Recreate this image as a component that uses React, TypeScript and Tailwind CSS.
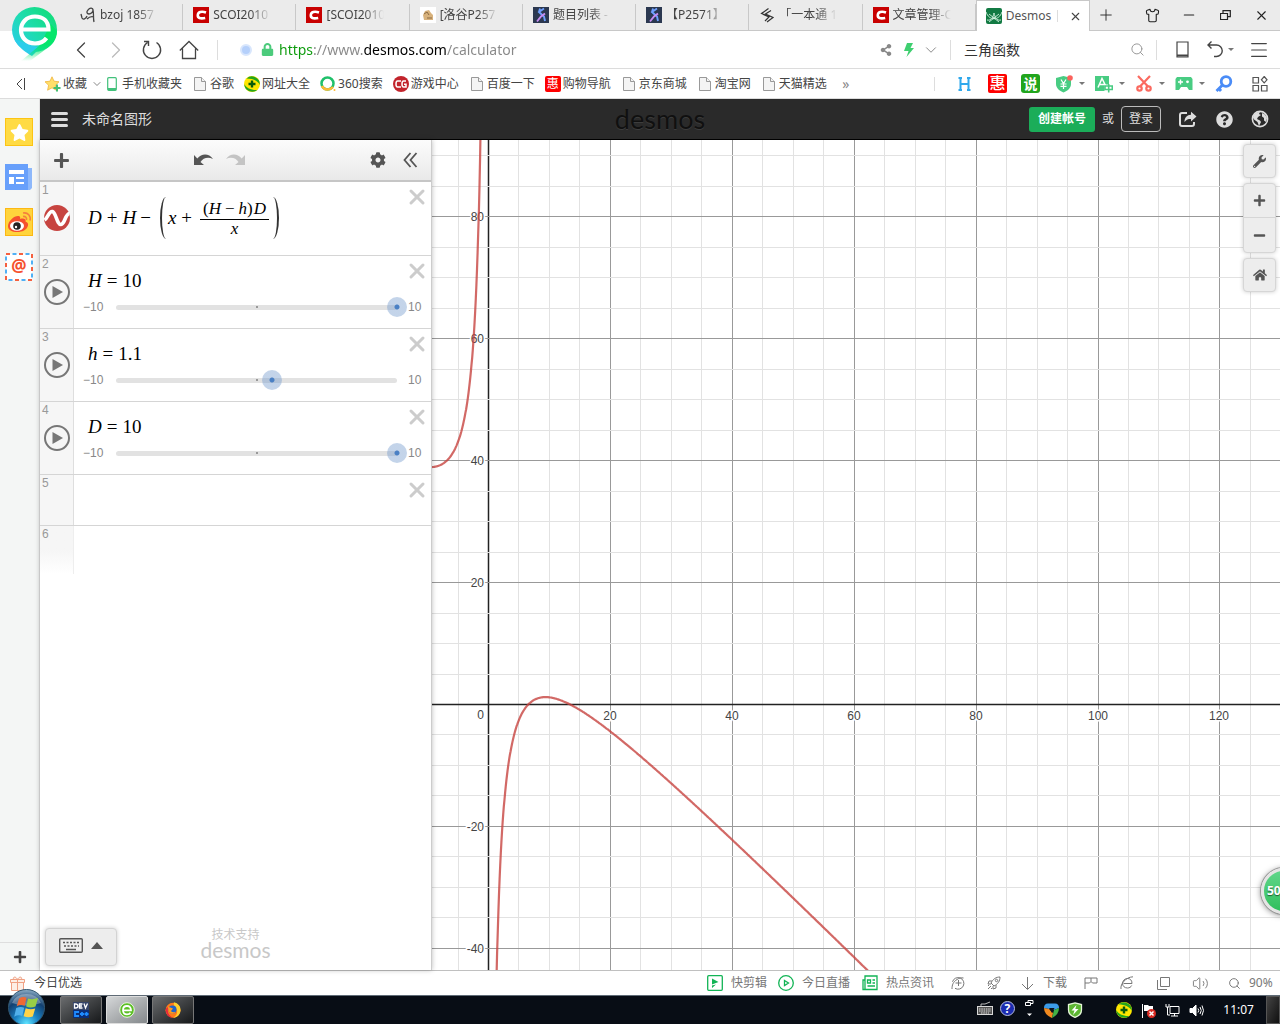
import { useState, type ReactNode } from 'react';
import {
  ChevronDown,
  ChevronLeft,
  ChevronRight,
  ChevronsLeft,
  Menu,
  Minus,
  Plus,
  Search,
  Shirt,
  Volume2,
  X,
} from 'lucide-react';
import {
  FaCog,
  FaGlobeAmericas,
  FaHome,
  FaLock,
  FaMinus,
  FaPlus,
  FaQuestionCircle,
  FaShareAlt,
  FaStar,
  FaWeibo,
  FaWrench,
} from 'react-icons/fa';

/* ---------- small shared pieces ---------- */

function IconButton({ label, className = '', children }: { label: string; className?: string; children: ReactNode }) {
  return (
    <button type="button" aria-label={label} className={`flex shrink-0 items-center justify-center ${className}`}>
      {children}
    </button>
  );
}

function Caret() {
  return <span className="h-0 w-0 border-x-[3px] border-t-[3px] border-x-transparent border-t-[#777]" />;
}

function DocIcon() {
  return (
    <svg width="12" height="14" viewBox="0 0 12 14" fill="#f4f4f4" stroke="#999">
      <path d="M.5.5h7l4 4v9H.5z" />
      <path d="M7.500.5v4h4" />
    </svg>
  );
}

function PlusBall() {
  return (
    <svg width="16" height="16" viewBox="0 0 16 16">
      <circle cx="8" cy="8" r="8" fill="#ffe600" />
      <path d="M2.500 2.500A8 8 0 0 1 15.800 9C14 5 9 2.500 2.500 2.500zM.2 8c2 4 7 6.300 13 6A8 8 0 0 1 .2 8z" fill="#25a51c" />
      <path d="M8 4.500v7M4.500 8h7" stroke="#0a5a0a" strokeWidth="2.400" />
    </svg>
  );
}

/* ---------- browser tabs ---------- */

function CsdnIcon() {
  return (
    <svg width="16" height="16" viewBox="0 0 16 16">
      <path d="M0 0h16v16H0z" fill="#c80000" />
      <path d="M13 5.500C8.500 4 5 5 4.800 8s2.200 4 7.400 3" fill="none" stroke="#fff" strokeWidth="2.600" />
    </svg>
  );
}

function BzojIcon() {
  return (
    <svg width="16" height="16" viewBox="0 0 16 16" fill="none" stroke="#444" strokeWidth="1.300">
      <path d="M1 7l1 4c1 2 4 1 5-2M8 3c-2 2-1 4 1 4s4-2 4-4-3-3-5 0zM13 3c1 4 0 8 1 12M7 12c2-2 4-3 7-2" />
    </svg>
  );
}

function LuoguIcon() {
  return (
    <svg width="16" height="16" viewBox="0 0 16 16">
      <path d="M0 0h16v16H0z" fill="#fff" />
      <path d="M3 8l2-4 4-1 2 3 2 2v5H4z" fill="#d8b27c" />
      <path d="M4 7l3-2 2 3M7 11h5" stroke="#8b6a42" fill="none" />
    </svg>
  );
}

function LojIcon() {
  return (
    <svg width="16" height="16" viewBox="0 0 16 16">
      <path d="M0 0h16v16H0z" fill="#2b3850" />
      <path d="M11 1.500L6 5l5 4.500 1 4.500M7 1.500L6 5" fill="none" stroke="#6fa0ff" strokeWidth="1.900" />
      <path d="M12 6.500L8 9.500 4 14.500" fill="none" stroke="#c68cf0" strokeWidth="1.900" />
    </svg>
  );
}

function OneBookIcon() {
  return (
    <svg width="14" height="16" viewBox="0 0 14 16" fill="none" stroke="#333" strokeWidth="1.200">
      <path d="M8.500 1.500L1.500 6.500 9 10 5 14M11 3.500L5.500 7l7.500 3.500-6 4.500" />
    </svg>
  );
}

function DesmosIcon() {
  return (
    <svg className="shrink-0" width="16" height="16" viewBox="0 0 16 16">
      <rect width="16" height="16" rx="2" fill="#127a43" />
      <path d="M0 4c3 9 13 9 16 0M1 12c5 1 6-3 7-7 1 4 2 8 7 7M3 14L13 6M13 14L3 6" fill="none" stroke="#d6f5e2" strokeWidth=".9" />
    </svg>
  );
}

const tabs = [
  { title: 'bzoj 1857', icon: <BzojIcon /> },
  { title: 'SCOI2010', icon: <CsdnIcon /> },
  { title: '[SCOI2010', icon: <CsdnIcon /> },
  { title: '[洛谷P257', icon: <LuoguIcon /> },
  { title: '题目列表 -', icon: <LojIcon /> },
  { title: '【P2571】', icon: <LojIcon /> },
  { title: '「一本通 1', icon: <OneBookIcon /> },
  { title: '文章管理-C', icon: <CsdnIcon /> },
];

function TabBar() {
  return (
    <div className="flex h-[31px] bg-[#ebebeb] pl-[70px] text-[12px] text-[#444]">
      <div className="flex min-w-0 flex-1">
        {tabs.map((tab, i) => (
          <button
            key={i}
            type="button"
            className="flex min-w-0 flex-1 items-center gap-[4px] border-b border-[#c8c8c8] pl-[10px] text-left"
          >
            <span className="flex w-4 shrink-0 justify-center">{tab.icon}</span>
            <span className="w-[58px] overflow-hidden whitespace-nowrap [mask-image:linear-gradient(to_right,black_65%,transparent)]">
              {tab.title}
            </span>
            <span className="ml-auto h-[26px] w-px self-end bg-[#c8c8c8]" />
          </button>
        ))}
        <div className="flex min-w-0 flex-1 items-center gap-[4px] border-x border-t border-[#c8c8c8] bg-white pl-[9px]">
          <DesmosIcon />
          <span className="whitespace-nowrap text-[#555]">Desmos</span>
          <span className="ml-[2px] h-3 w-px bg-[#ddd]" />
          <IconButton label="关闭标签" className="ml-auto w-[26px]">
            <X size={13} strokeWidth={2} color="#444" />
          </IconButton>
        </div>
      </div>
      <div className="flex w-[190px] shrink-0 items-center border-b border-[#c8c8c8] text-[#222]">
        <IconButton label="新建标签" className="w-[32px]">
          <Plus size={18} strokeWidth={1.2} />
        </IconButton>
        <div className="ml-auto flex">
          <IconButton label="皮肤" className="w-[36px]">
            <Shirt size={15} strokeWidth={1.8} />
          </IconButton>
          <IconButton label="最小化" className="w-[37px]">
            <Minus size={16} strokeWidth={1.8} />
          </IconButton>
          <IconButton label="还原" className="w-[36px]">
            <svg width="11" height="11" viewBox="0 0 11 11" fill="none" stroke="currentColor" strokeWidth="1.200">
              <path d="M.5 3.500h7v6h-7zM3 3V.7h7.300v6H8" />
            </svg>
          </IconButton>
          <IconButton label="关闭" className="w-[37px]">
            <X size={15} strokeWidth={1.8} />
          </IconButton>
        </div>
      </div>
    </div>
  );
}

function BrowserLogo() {
  return (
    <svg className="absolute top-[6px] left-[11px] z-10" width="47" height="56" viewBox="0 0 47 56">
      <defs>
        <linearGradient id="pin" x1="0" y1="1" x2="1" y2=".2">
          <stop offset="0" stopColor="#29ccf0" />
          <stop offset=".5" stopColor="#1fdcb0" />
          <stop offset="1" stopColor="#12dd78" />
        </linearGradient>
        <linearGradient id="tail" gradientUnits="userSpaceOnUse" x1="0" y1="38" x2="0" y2="55">
          <stop offset="0" stopColor="#06e66b" />
          <stop offset="1" stopColor="#06e66b" stopOpacity="0" />
        </linearGradient>
      </defs>
      <circle cx="23.500" cy="23.500" r="22.500" fill="url(#pin)" />
      <path d="M3 33C7 41 14 46 21 50l8-8z" fill="#2ccdea" />
      <path d="M10 55L28 40l12-22 6 7c0 9-5 14-11 18L19 55z" fill="url(#tail)" />
      <path d="M12 23.500h25.500C37.500 15 32 10.500 24 10.500c-8.500 0-14 6-14 13.500s5.500 13.500 14 13.500c5 0 9-2 11.500-5.500" fill="none" stroke="#fff" strokeWidth="4.200" />
    </svg>
  );
}

/* ---------- address bar ---------- */

function AddressBar() {
  return (
    <div className="flex h-[38px] items-center border-b border-[#dcdcdc] bg-white pl-[63px] text-[#444]">
      <IconButton label="后退" className="w-[36px]">
        <ChevronLeft size={28} strokeWidth={1.1} />
      </IconButton>
      <IconButton label="前进" className="w-[34px] text-[#bbb]">
        <ChevronRight size={28} strokeWidth={1.1} />
      </IconButton>
      <IconButton label="刷新" className="w-[38px]">
        <svg width="20" height="20" viewBox="0 0 20 20" fill="none" stroke="currentColor" strokeWidth="1.400">
          <path d="M14.500 2.500a8.600 8.600 0 1 1-9 0M2 1.500h4.500V6" />
        </svg>
      </IconButton>
      <IconButton label="主页" className="w-[36px]">
        <svg width="20" height="20" viewBox="0 0 20 20" fill="none" stroke="currentColor" strokeWidth="1.300">
          <path d="M.8 10.500L10 1.500l9.200 9M3.500 8.500v10h13v-10" />
        </svg>
      </IconButton>
      <span className="ml-[10px] h-5 w-px bg-[#ddd]" />
      <span className="ml-[22px] h-[12px] w-[12px] rounded-full border-2 border-[#d8e6fc] bg-[#b5d0fb]" />
      <FaLock className="ml-[9px] text-[#4ccb7c]" size={13} />
      <input
        type="text"
        aria-label="网址"
        defaultValue="https://www.desmos.com/calculator"
        className="ml-[5px] min-w-0 flex-1 bg-[linear-gradient(to_right,#0a9a0a_34px,#888_34px,#888_85px,#000_85px,#000_168px,#888_168px)] bg-clip-text text-[14px] text-transparent outline-none"
      />
      <IconButton label="分享" className="w-[24px] text-[#888]">
        <FaShareAlt size={12} />
      </IconButton>
      <IconButton label="极速模式" className="w-[21px] text-[#3fcf70]">
        <svg width="10" height="14" viewBox="0 0 10 14" fill="currentColor">
          <path d="M3 0h6L6.500 5H10L2.500 14 4.500 8H0z" />
        </svg>
      </IconButton>
      <IconButton label="更多" className="w-[24px] text-[#888]">
        <ChevronDown size={18} strokeWidth={1.3} />
      </IconButton>
      <span className="ml-[7px] h-5 w-px bg-[#ddd]" />
      <input
        type="text"
        aria-label="搜索"
        defaultValue="三角函数"
        className="ml-[13px] w-[160px] bg-transparent text-[14px] text-[#333] outline-none"
      />
      <IconButton label="搜索" className="w-[26px] text-[#999]">
        <Search size={15} strokeWidth={1.6} />
      </IconButton>
      <span className="ml-[6px] h-5 w-px bg-[#ddd]" />
      <IconButton label="手机" className="ml-[12px] w-[26px]">
        <svg width="13" height="17" viewBox="0 0 13 17" fill="none" stroke="currentColor" strokeWidth="1.200">
          <path d="M1 1h11v15H1z" />
          <path d="M1 14.500h11" strokeWidth="2" />
        </svg>
      </IconButton>
      <IconButton label="撤销关闭" className="ml-[8px] w-[34px] gap-[5px]">
        <svg width="16" height="17" viewBox="0 0 16 17" fill="none" stroke="currentColor" strokeWidth="1.400">
          <path d="M4.500.5L1 4l3.500 3.500M1 4h8.500a5.700 5.700 0 0 1 0 11.500H7" />
        </svg>
        <Caret />
      </IconButton>
      <IconButton label="菜单" className="mr-[5px] ml-[6px] w-[32px]">
        <Menu size={22} strokeWidth={1.3} />
      </IconButton>
    </div>
  );
}

/* ---------- bookmarks ---------- */

const bookmarks = [
  {
    label: '手机收藏夹',
    icon: (
      <svg width="10" height="14" viewBox="0 0 10 14">
        <rect x=".7" y=".7" width="8.600" height="12.600" rx="1" fill="#fff" stroke="#42c17b" strokeWidth="1.200" />
        <path d="M1 11h8v2H1z" fill="#42c17b" />
      </svg>
    ),
  },
  { label: '谷歌', icon: <DocIcon /> },
  { label: '网址大全', icon: <PlusBall /> },
  {
    label: '360搜索',
    icon: (
      <svg width="16" height="16" viewBox="0 0 16 16" fill="none" strokeWidth="2.500">
        <circle cx="7.500" cy="7.500" r="6" stroke="#1fc06a" />
        <path d="M2 10c2 4.500 8 4.500 11 1" stroke="#fdb933" />
        <circle cx="14.500" cy="14" r="1" fill="#fdb933" stroke="none" />
      </svg>
    ),
  },
  {
    label: '游戏中心',
    icon: (
      <svg width="16" height="16" viewBox="0 0 16 16">
        <circle cx="8" cy="8" r="8" fill="#c2242c" />
        <path d="M8 5H4.500Q3 5 3 8t1.500 3H8M13 5h-2.500Q9 5 9 8t1.500 3H13V8.300h-2" fill="none" stroke="#fff" strokeWidth="1.500" />
      </svg>
    ),
  },
  { label: '百度一下', icon: <DocIcon /> },
  {
    label: '购物导航',
    icon: (
      <span className="flex h-4 w-4 items-center justify-center rounded-[2px] bg-[#fe0000] text-[12px] leading-[12px] text-white">惠</span>
    ),
  },
  { label: '京东商城', icon: <DocIcon /> },
  { label: '淘宝网', icon: <DocIcon /> },
  { label: '天猫精选', icon: <DocIcon /> },
];

const extensions = [
  {
    label: '购物',
    icon: (
      <svg width="18" height="18" viewBox="0 0 18 18">
        <path d="M8.500 1L16 3v6c0 4-3.500 7-7.500 8.500C4.500 16 1 13 1 9V3z" fill="#48cc82" />
        <path d="M6 4.500l2.500 4 2.500-4M8.500 8.500V14M5.500 9h6M5.500 11.300h6" stroke="#fff" strokeWidth="1.200" fill="none" />
        <circle cx="15" cy="3" r="2.800" fill="#fb625c" />
      </svg>
    ),
  },
  {
    label: '翻译',
    icon: (
      <svg width="18" height="18" viewBox="0 0 18 18">
        <path d="M0 1h14v8.500H9.500V16H0z" fill="#48cc82" />
        <path d="M3 12.500l4-9 3.500 7M4.500 9.500h5" stroke="#fff" strokeWidth="1.500" fill="none" />
        <path d="M10 11h7.300v3.500H10zM13.700 9v8.500" stroke="#48cc82" strokeWidth="1.600" fill="none" />
      </svg>
    ),
  },
  {
    label: '截图',
    icon: (
      <svg width="16" height="17" viewBox="0 0 16 17" fill="none" stroke="#fb6a60" strokeWidth="2.200">
        <path d="M2 1l10 10.500M14 1L4 11.500" />
        <circle cx="3.500" cy="13.500" r="2.200" />
        <circle cx="12.500" cy="13.500" r="2.200" />
      </svg>
    ),
  },
  {
    label: '游戏',
    icon: (
      <svg width="18" height="15" viewBox="0 0 18 15">
        <path d="M2 1h14l1.500 2v11H14l-2-3H6l-2 3H.5V3z" fill="#48cc82" />
        <path d="M5.500 3.500v5M3 6h5" stroke="#fff" strokeWidth="1.400" />
        <circle cx="12.500" cy="5.800" r="1.400" fill="#fff" />
      </svg>
    ),
  },
];

function BookmarkBar() {
  return (
    <div className="flex h-[30px] items-center border-b border-[#dcdcdc] bg-white pl-[10px] text-[12px] text-[#444]">
      <IconButton label="侧栏" className="w-[22px]">
        <svg width="10" height="12" viewBox="0 0 10 12" fill="none" stroke="currentColor">
          <path d="M6 1L1 6l5 5M8.500 0v12" />
        </svg>
      </IconButton>
      <button type="button" className="ml-[13px] flex items-center gap-[2px] whitespace-nowrap">
        <svg width="16" height="16" viewBox="0 0 16 16">
          <path d="M7 .8l2 4.400 5 .6-3.600 3.400 1 5L7 11.800l-4.400 2.400 1-5L0 5.800l5-.6z" fill="#ffdf6b" stroke="#f0b43a" strokeWidth=".8" />
          <path d="M12 8.500v7M8.500 12h7" stroke="#45be74" strokeWidth="2" />
        </svg>
        收藏
        <ChevronDown className="ml-[2px]" size={12} strokeWidth={1.8} color="#777" />
      </button>
      <nav className="ml-px flex gap-[10px]" aria-label="收藏栏">
        {bookmarks.map((b) => (
          <a key={b.label} href="#" className="flex items-center gap-[2px] whitespace-nowrap">
            <span className="flex w-4 justify-center">{b.icon}</span>
            {b.label}
          </a>
        ))}
      </nav>
      <IconButton label="更多收藏" className="w-[38px] text-[14px] text-[#888]">
        »
      </IconButton>

      <div className="mr-[11px] ml-auto flex items-center">
        <span className="mr-[13px] h-[14px] w-px bg-[#ddd]" />
        <IconButton label="好搜" className="w-[33px] text-[#2fa8ec]">
          <svg width="13" height="14" viewBox="0 0 13 14" fill="none" stroke="currentColor" strokeWidth="2">
            <path d="M2.500 1v12M10.500 1v12M2 7h9M.5 1H4M.5 13H4M9 1h3.500M9 13h3.500" />
          </svg>
        </IconButton>
        <IconButton label="优惠" className="w-[33px]">
          <span className="flex h-[19px] w-[19px] items-center justify-center rounded-[2px] bg-[#fe0000] text-[16px] leading-[19px] font-medium text-white">惠</span>
        </IconButton>
        <IconButton label="说" className="mr-[7px] w-[33px]">
          <span className="flex h-[19px] w-[19px] items-center justify-center rounded-[3px] bg-[#21a51d] text-[14px] leading-[19px] font-bold text-white">说</span>
        </IconButton>
        {extensions.map((e) => (
          <IconButton key={e.label} label={e.label} className="w-[40px] gap-[5px] pr-[9px]">
            <span className="flex w-[20px] justify-center">{e.icon}</span>
            <Caret />
          </IconButton>
        ))}
        <IconButton label="密码" className="w-[20px]">
          <svg width="18" height="18" viewBox="0 0 18 18" fill="none" stroke="#4a8cf7" strokeWidth="2.800">
            <circle cx="11" cy="6.500" r="4.800" />
            <path d="M7.500 10L1.500 16M3.500 13l2.500 3" />
          </svg>
        </IconButton>
        <IconButton label="扩展" className="ml-[17px] w-[18px]">
          <svg width="16" height="16" viewBox="0 0 16 16" fill="none" stroke="#555" strokeWidth="1.200">
            <path d="M1 1.500h5.500V7H1zM1 9.500h5.500V15H1zM9.500 9.500H15V15H9.500zM12.200.5L15 3.800l-2.800 3-2.800-3z" />
          </svg>
        </IconButton>
      </div>
    </div>
  );
}

/* ---------- browser sidebar ---------- */

function Sidebar() {
  return (
    <aside className="flex w-[40px] shrink-0 flex-col border-r border-[#e2e2e2] bg-[#f4f6f5]">
      <div className="flex flex-col gap-[17px] pt-[19px] pl-[5px]">
        <IconButton label="收藏" className="h-7 w-7 border border-[#fcc413] bg-[#ffdb44] text-white">
          <FaStar size={19} />
        </IconButton>
        <IconButton label="新闻" className="h-7 w-7">
          <svg width="28" height="26" viewBox="0 0 28 26">
            <path d="M20 4h7v20l-2 2h-5z" fill="#8db8fb" />
            <path d="M0 0h23v26H0z" fill="#68a0fb" />
            <path d="M4 6h15v4H4zM4 13h5v7H4zM11 13h8v2h-8zM11 18h8v2h-8z" fill="#fff" />
          </svg>
        </IconButton>
        <IconButton label="微博" className="h-7 w-7 border border-[#fcb813] bg-[#ffd43c] text-[#f5512e]">
          <svg width="26" height="26" viewBox="0 0 26 26">
            <path d="M2 17c0-5 6-10 10-10 2.500 0 2.500 2 2 3 3-1 6.500-.5 5.500 2.500 2 .8 3 2.200 2.500 4-1 4.500-6 6.500-10.500 6.500C6 23 2 21 2 17z" fill="#f5512e" />
            <ellipse cx="11" cy="17" rx="7" ry="4.800" fill="#fff" />
            <circle cx="11" cy="17" r="3.800" fill="#222" />
            <circle cx="10" cy="18" r="1.200" fill="#fff" />
            <path d="M17 7.500c2.500-.5 4 1.500 3.500 3.500M17 4c5-1 8 3 7 7.500" fill="none" stroke="#f5803e" strokeWidth="1.600" />
          </svg>
        </IconButton>
        <IconButton label="邮箱" className="h-7 w-7">
          <svg width="28" height="28" viewBox="0 0 28 28" fill="none">
            <rect x="1" y="1" width="26" height="26" fill="#fff" stroke="#f5603f" strokeWidth="2" strokeDasharray="4 9" />
            <rect x="1" y="1" width="26" height="26" stroke="#4fb0f5" strokeWidth="2" strokeDasharray="4 9" strokeDashoffset="-6.500" />
            <text x="14" y="19" textAnchor="middle" fontSize="17" fontWeight="bold" fill="#f5512e" fontFamily="Noto Sans">@</text>
          </svg>
        </IconButton>
      </div>
      <IconButton label="添加" className="mt-auto h-[28px] w-full border-t border-[#dedede] text-[#444]">
        <FaPlus size={14} />
      </IconButton>
    </aside>
  );
}

/* ---------- calculator ---------- */

function Header() {
  return (
    <header className="grid h-[41px] grid-cols-[1fr_auto_1fr] items-center border-b border-black bg-[#2a2a2a] text-[#ddd]">
      <div className="flex items-center gap-[14px] pl-[11px]">
        <button type="button" aria-label="打开图形" className="flex w-[17px] flex-col gap-[3px]">
          <span className="h-[3px] rounded-sm bg-[#ddd]" />
          <span className="h-[3px] rounded-sm bg-[#ddd]" />
          <span className="h-[3px] rounded-sm bg-[#ddd]" />
        </button>
        <button type="button" className="text-[14px] leading-[18px]">未命名图形</button>
      </div>
      <span className="font-[Lato,sans-serif] text-[27px] leading-[36px] text-[#101010] [text-shadow:0_1px_0_#3d3d3d]">desmos</span>
      <div className="flex items-center justify-end pr-[2px] text-[12px]">
        <button type="button" className="h-[25px] rounded-[3px] bg-[#1bad59] px-[9px] font-bold text-white">创建帐号</button>
        <span className="px-[7px]">或</span>
        <button type="button" className="h-[26px] rounded-[4px] border border-[#bbb] px-[7px]">登录</button>
        <IconButton label="分享图形" className="ml-[9px] w-[36px]">
          <svg width="18" height="16" viewBox="0 0 18 16" fill="none" stroke="currentColor" strokeWidth="2">
            <path d="M8 2H3Q1 2 1 4v9q0 2 2 2h10q2 0 2-2v-2" />
            <path d="M17.500 5.500L12 .8v3C8 4 5.500 6.500 5.500 11 7.500 8.500 9 8 12 8v2.500z" fill="currentColor" stroke="none" />
          </svg>
        </IconButton>
        <IconButton label="帮助" className="w-[36px]">
          <FaQuestionCircle size={17} />
        </IconButton>
        <IconButton label="语言" className="w-[36px]">
          <svg width="18" height="18" viewBox="0 0 18 18">
            <circle cx="9" cy="9" r="7.600" fill="none" stroke="currentColor" strokeWidth="1.600" />
            <path d="M2 7.500C3 4 5.500 2 9 1.800L8 4l2 1-3 2-1 2 3 1.500L10 12l-2 4-1.500-4L3 9.500zM11 3l3 1.500 2 3.500-1 4-2-1.500V8L11 6.500z" fill="currentColor" />
          </svg>
        </IconButton>
      </div>
    </header>
  );
}

function Toolbar() {
  return (
    <div className="flex h-[42px] shrink-0 items-center border-b-2 border-[#c6c6c6] bg-linear-to-b from-[#fcfcfc] to-[#e9e9e9] text-[#555]">
      <IconButton label="添加项目" className="w-[42px]">
        <FaPlus size={17} />
      </IconButton>
      <div className="mr-[6px] ml-auto flex">
        <IconButton label="撤销" className="w-[32px]">
          <svg width="19" height="12" viewBox="0 0 19 12" fill="currentColor">
            <path d="M0 1v10h10L6.500 8C9 4 14 2.500 19 5 15-.5 8-1 3.300 4.500z" />
          </svg>
        </IconButton>
        <IconButton label="重做" className="w-[32px] text-[#c4c4c4]">
          <svg width="19" height="12" viewBox="0 0 19 12" fill="currentColor">
            <path d="M19 1v10H9l3.500-3C10 4 5 2.500 0 5 4-.5 11-1 15.700 4.500z" />
          </svg>
        </IconButton>
      </div>
      <div className="mr-[5px] ml-auto flex">
        <IconButton label="编辑列表" className="w-[32px]">
          <FaCog size={16} />
        </IconButton>
        <IconButton label="隐藏列表" className="w-[32px]">
          <svg width="15" height="16" viewBox="0 0 15 16" fill="none" stroke="currentColor" strokeWidth="1.800">
            <path d="M7.500 1l-6 7 6 7M13.500 1l-6 7 6 7" />
          </svg>
        </IconButton>
      </div>
    </div>
  );
}

type Params = { H: number; h: number; D: number };

function Row({ n, height, badge, children, closable = true }: {
  n: number;
  height: string;
  badge?: ReactNode;
  children?: ReactNode;
  closable?: boolean;
}) {
  return (
    <li className={`flex border-b border-[#d5d5d5] ${height}`}>
      <div className="flex w-[34px] shrink-0 flex-col border-r border-[#dedede] bg-[#f6f6f6]">
        <span className="pt-px pl-[2px] text-[12px] leading-[14px] text-[#999]">{n}</span>
        <div className="flex justify-center pt-[8px]">{badge}</div>
      </div>
      <div className="relative min-w-0 flex-1">
        {children}
        {closable && (
          <IconButton label={`删除 ${n}`} className="absolute top-[3px] right-[2px] h-[24px] w-[24px] text-[#ccc]">
            <X size={28} strokeWidth={3} />
          </IconButton>
        )}
      </div>
    </li>
  );
}

function PlayButton({ name }: { name: string }) {
  return (
    <IconButton label={`播放 ${name}`} className="h-[26px] w-[26px] rounded-full border-2 border-[#777] text-[#777]">
      <svg width="12" height="12" viewBox="0 0 12 12" fill="currentColor">
        <path d="M1.500 0L12 6 1.500 12z" />
      </svg>
    </IconButton>
  );
}

function SliderRow({ n, name, value, onChange }: { n: number; name: string; value: number; onChange: (v: number) => void }) {
  const id = `slider-${name}`;
  return (
    <Row n={n} height="h-[73px]" badge={<PlayButton name={name} />}>
      <label
        htmlFor={id}
        className="flex gap-[5px] pt-[13px] pl-[14px] font-['Liberation_Serif',serif] text-[19px] leading-[24px] text-black"
      >
        <i>{name}</i>
        <span>=</span>
        <span>{value}</span>
      </label>
      <div className="mt-[4px] flex items-center pl-[9px] text-[12px] leading-[20px] text-[#888]">
        <span className="w-[24px]">−10</span>
        <div className="grid h-5 flex-1 items-center">
          <span className="col-start-1 row-start-1 mr-[10px] ml-[9px] h-[5px] rounded-full bg-[#e2e2e2]" />
          <span className="col-start-1 row-start-1 h-[2px] w-[2px] justify-self-center bg-[#999]" />
          <input
            id={id}
            type="range"
            min={-10}
            max={10}
            step={0.1}
            value={value}
            onChange={(e) => onChange(Number(e.target.value))}
            className="col-start-1 row-start-1 h-5 w-full appearance-none bg-transparent [&::-webkit-slider-thumb]:h-5 [&::-webkit-slider-thumb]:w-5 [&::-webkit-slider-thumb]:appearance-none [&::-webkit-slider-thumb]:rounded-full [&::-webkit-slider-thumb]:bg-[radial-gradient(circle,#4a80c4_0_2px,#7299cc6c_3px)]"
          />
        </div>
        <span className="w-[24px] pl-px">10</span>
      </div>
    </Row>
  );
}

function ExpressionPanel({ params, setParams }: { params: Params; setParams: (p: Params) => void }) {
  return (
    <section className="z-10 flex w-[392px] shrink-0 flex-col border-r border-[#ccc] bg-white font-['Liberation_Sans','Noto_Sans_CJK_SC',sans-serif] shadow-[0_0_5px_#0004]">
      <Toolbar />
      <ol>
        <Row
          n={1}
          height="h-[74px]"
          badge={
            <IconButton label="隐藏曲线" className="h-[26px] w-[26px]">
              <svg width="26" height="26" viewBox="0 0 26 26">
                <circle cx="13" cy="13" r="13" fill="#c74440" />
                <path d="M.5 15C4 13 5 5.500 8.500 6.500S13 20 17 19.500 21 9 25.500 8.500" fill="none" stroke="#fff" strokeWidth="3.600" />
              </svg>
            </IconButton>
          }
        >
          <div className="flex items-center pt-[15px] pl-[14px] font-['Liberation_Serif',serif] text-[19px] leading-[24px] text-black">
            <i>D</i>
            <span className="px-[5px]">+</span>
            <i>H</i>
            <span className="px-[4px]">−</span>
            <span className="mr-[2px] ml-[5px] h-[42px] w-[6px] rounded-[100%_0_0_100%/50%_0_0_50%] border-l-2 border-[#333]" />
            <i>x</i>
            <span className="px-[5px]">+</span>
            <span className="ml-[3px] flex flex-col items-center text-[17px] leading-[20px]">
              <span className="border-b border-black px-[3px]">
                (<i>H</i>
                <span className="px-[4px]">−</span>
                <i>h</i>)<i className="pl-px">D</i>
              </span>
              <i className="leading-[18px]">x</i>
            </span>
            <span className="mx-[4px] h-[42px] w-[6px] rounded-[0_100%_100%_0/0_50%_50%_0] border-r-2 border-[#333]" />
          </div>
        </Row>
        <SliderRow n={2} name="H" value={params.H} onChange={(H) => setParams({ ...params, H })} />
        <SliderRow n={3} name="h" value={params.h} onChange={(h) => setParams({ ...params, h })} />
        <SliderRow n={4} name="D" value={params.D} onChange={(D) => setParams({ ...params, D })} />
        <Row n={5} height="h-[51px]" />
      </ol>
      <div className="h-[48px] w-[34px] border-r border-[#eee] bg-linear-to-b from-[#f6f6f6] from-50% to-white pt-px pl-[2px] text-[12px] leading-[14px] text-[#999]">
        6
      </div>

      <div className="mt-auto grid grid-cols-[1fr_auto_1fr] items-center px-[5px] pb-[4px]">
        <button
          type="button"
          aria-label="打开键盘"
          className="flex h-[38px] w-[72px] items-center justify-center gap-[8px] rounded-[4px] border border-[#d3d3d3] bg-[#ededed] pb-[4px] text-[#555] shadow-[0_0_4px_#0003]"
        >
          <svg width="24" height="15" viewBox="0 0 24 15" fill="none" stroke="currentColor">
            <rect x=".7" y=".7" width="22.600" height="13.600" rx="1" strokeWidth="1.400" />
            <path d="M4 4.500h17M5 8h15" strokeWidth="1.500" strokeDasharray="2 1.500" />
            <path d="M7 11.500h10" strokeWidth="1.500" />
          </svg>
          <span className="h-0 w-0 border-x-[6px] border-b-[7px] border-x-transparent border-b-[#555]" />
        </button>
        <div className="flex flex-col items-center pb-[8px] text-[12px] leading-[13px] text-[#c8c8c8]">
          技术支持
          <span className="font-[Lato,sans-serif] text-[21px] leading-[16px]">desmos</span>
        </div>
      </div>
    </section>
  );
}

// pixels per unit, and where (0, 0) falls in the graph paper
const UNIT = 6.095;
const ORIGIN_X = 56;
const ORIGIN_Y = 564;

const px = (x: number) => ORIGIN_X + x * UNIT;
const py = (y: number) => ORIGIN_Y - y * UNIT;

function branch(f: (x: number) => number, from: number, to: number) {
  const points: string[] = [];
  for (let i = 0; i <= (to - from) * 10; i++) {
    const x = from + i / 10;
    const y = f(x);
    if (Math.abs(y) < 300) points.push(`${px(x).toFixed(1)},${py(y).toFixed(1)}`);
  }
  return points.join(' ');
}

function Graph({ params }: { params: Params }) {
  const { H, h, D } = params;
  const f = (x: number) => D + H - (x + ((H - h) * D) / x);
  const columns = Array.from({ length: 90 }, (_, i) => (i - 1) * 5);
  const rows = Array.from({ length: 80 }, (_, i) => 90 - i * 5);

  return (
    <div className="relative min-w-0 flex-1 overflow-hidden bg-white">
      <svg className="h-full w-full font-['Liberation_Sans',sans-serif]" role="img" aria-label="函数图像">
        {columns.map((x) => (
          <line
            key={x}
            x1={Math.round(px(x)) + 0.5}
            x2={Math.round(px(x)) + 0.5}
            y1="0"
            y2="100%"
            stroke={x === 0 ? '#222' : x % 20 === 0 ? '#999' : '#e2e2e2'}
            strokeWidth={x === 0 ? 1.5 : 1}
          />
        ))}
        {rows.map((y) => (
          <line
            key={y}
            x1="0"
            x2="100%"
            y1={Math.round(py(y)) + 0.5}
            y2={Math.round(py(y)) + 0.5}
            stroke={y === 0 ? '#222' : y % 20 === 0 ? '#999' : '#e2e2e2'}
            strokeWidth={y === 0 ? 1.5 : 1}
          />
        ))}
        <g fontSize="12" fill="#444" stroke="#fff" strokeWidth="3" style={{ paintOrder: 'stroke' }}>
          {columns.filter((x) => x > 0 && x % 20 === 0).map((x) => (
            <text key={x} x={Math.round(px(x))} y={ORIGIN_Y + 16} textAnchor="middle">{x}</text>
          ))}
          {rows.filter((y) => y !== 0 && y % 20 === 0).map((y) => (
            <text key={y} x={ORIGIN_X - 4} y={Math.round(py(y)) + 5} textAnchor="end">{y}</text>
          ))}
          <text x={ORIGIN_X - 4} y={ORIGIN_Y + 15} textAnchor="end">0</text>
        </g>
        <g fill="none" stroke="#c74440" strokeOpacity=".8" strokeWidth="2.200">
          <polyline points={branch(f, -10, -0.1)} />
          <polyline points={branch(f, 0.1, 250)} />
        </g>
      </svg>

      <div className="absolute top-[4px] right-[4px] flex flex-col gap-[5px] text-[#555]">
        <IconButton label="图形设置" className="h-[34px] w-[33px] rounded-[4px] border border-[#d6d6d6] bg-[#ededed] shadow-[0_0_4px_#0003]">
          <FaWrench size={13} />
        </IconButton>
        <div className="flex flex-col rounded-[4px] border border-[#d6d6d6] bg-[#ededed] shadow-[0_0_4px_#0003]">
          <IconButton label="放大" className="h-[34px] border-b border-[#d6d6d6]">
            <FaPlus size={13} />
          </IconButton>
          <IconButton label="缩小" className="h-[34px]">
            <FaMinus size={13} />
          </IconButton>
        </div>
        <IconButton label="默认视图" className="h-[34px] w-[33px] rounded-[4px] border border-[#d6d6d6] bg-[#ededed] shadow-[0_0_4px_#0003]">
          <FaHome size={14} />
        </IconButton>
      </div>

      {/* speed ball hanging off the window edge */}
      <div className="absolute right-[-27px] bottom-[56px] flex h-[46px] w-[46px] items-center rounded-full border-[3px] border-[#e4e4e4] bg-linear-to-b from-[#5fd68a] to-[#2fbf5c] pl-[3px] text-[12px] font-bold text-white shadow-[0_1px_6px_#0008] ring-1 ring-[#999] [text-shadow:0_1px_1px_#0008]">
        50
      </div>
    </div>
  );
}

/* ---------- status bar ---------- */

function StatusBar() {
  return (
    <footer className="flex h-[25px] items-center border-t border-[#c0c0c0] bg-white pr-[5px] text-[12px] leading-[16px] text-[#777]">
      <button type="button" className="flex items-center gap-[9px] pl-[10px] text-[#444]">
        <svg width="15" height="15" viewBox="0 0 15 15" fill="#fdeee6" stroke="#f0a184">
          <path d="M.5 3.500h14v3H.5zM1.500 6.500h12v8h-12zM7.500 3.500v11M7.500 3.500C5-1 2 2 4 3.500M7.500 3.500c2.500-4.500 5.500-1.500 3.500 0" />
        </svg>
        今日优选
      </button>
      <div className="ml-auto flex items-center whitespace-nowrap">
        <button type="button" className="mr-[11px] flex items-center gap-[8px]">
          <svg width="16" height="16" viewBox="0 0 16 16" fill="none" stroke="#12b455" strokeWidth="1.300">
            <rect x=".7" y=".7" width="14.600" height="14.600" rx="1" />
            <path d="M5 3.500l6.500 3.500L5 9.500zM5 10.500l4-1-4 3.500z" fill="#12b455" stroke="none" />
          </svg>
          快剪辑
        </button>
        <button type="button" className="mr-[12px] flex items-center gap-[8px]">
          <svg width="16" height="16" viewBox="0 0 16 16" fill="none" stroke="#12b455" strokeWidth="1.300">
            <circle cx="8" cy="8" r="7.300" />
            <path d="M6.500 5.500l4 2.500-4 2.500z" />
          </svg>
          今日直播
        </button>
        <button type="button" className="mr-[6px] flex items-center gap-[8px]">
          <svg width="16" height="16" viewBox="0 0 16 16" fill="none" stroke="#12b455" strokeWidth="1.300">
            <path d="M3 1h12v13.500H1V5h2zM3 5v9M5.500 5h3v3h-3zM10.500 5h2.500M10.500 8h2.500M5.500 11h7.500" />
          </svg>
          热点资讯
        </button>
        <IconButton label="加速" className="w-[36px]">
          <svg width="14" height="14" viewBox="0 0 14 14" fill="none" stroke="currentColor">
            <path d="M4 12.300a5.800 5.800 0 1 0-2.500-6.500M7.500 4v6M4.500 7h6M1 13C1 9 2 6 6 3.500 8 2 10 1.500 12.500 2" />
          </svg>
        </IconButton>
        <IconButton label="加速器" className="w-[36px]">
          <svg width="14" height="14" viewBox="0 0 14 14" fill="none" stroke="currentColor">
            <path d="M13 1C9 1 6 3 4 7l3 3c4-2 6-5 6-9zM5 5H2L1 8h3M9 9v3l-3 1v-3M4 10l-3 3M2 9l-1 1M5 12l-1 1" />
            <circle cx="9.500" cy="4.500" r="1.200" />
          </svg>
        </IconButton>
        <button type="button" className="flex w-[61px] items-center gap-[9px] pl-[9px]">
          <svg width="13" height="13" viewBox="0 0 13 13" fill="none" stroke="currentColor">
            <path d="M6.500 0v12M1 7l5.500 5.500L12 7" />
          </svg>
          下载
        </button>
        <IconButton label="标记" className="w-[36px]">
          <svg width="14" height="12" viewBox="0 0 14 12" fill="none" stroke="currentColor">
            <path d="M1 12V1h12v5H8.500L7 4.500 5.500 6H1M7 1v3.500" />
          </svg>
        </IconButton>
        <IconButton label="内核" className="w-[36px]">
          <svg width="14" height="14" viewBox="0 0 14 14" fill="none" stroke="currentColor">
            <path d="M3.500 7.500h8.500C12 4 10 2.500 7.500 2.500 4.500 2.500 2.500 5 2.500 7.500s2 4.500 5 4.500c2 0 3.500-1 4.200-2.500M1 13C0 8 6 1 13 .8" />
          </svg>
        </IconButton>
        <IconButton label="窗口" className="w-[37px]">
          <svg width="13" height="13" viewBox="0 0 13 13" fill="none" stroke="currentColor">
            <path d="M3.500.5h9v9h-9zM.5 3v9.500H10" />
          </svg>
        </IconButton>
        <IconButton label="声音" className="w-[37px]">
          <Volume2 size={17} strokeWidth={1.3} />
        </IconButton>
        <IconButton label="缩放" className="w-[30px]">
          <Search size={13} strokeWidth={1.8} />
        </IconButton>
        <span className="w-[26px]">90%</span>
      </div>
    </footer>
  );
}

/* ---------- desktop task bar ---------- */

function StartOrb() {
  return (
    <svg width="37" height="37" viewBox="0 0 37 37">
      <defs>
        <radialGradient id="orb" cx=".5" cy=".95" r=".95">
          <stop offset="0" stopColor="#5fe4ff" />
          <stop offset=".35" stopColor="#1b82c4" />
          <stop offset=".7" stopColor="#123f70" />
          <stop offset="1" stopColor="#8fb0c8" />
        </radialGradient>
      </defs>
      <circle cx="18.500" cy="18.500" r="18" fill="url(#orb)" stroke="#31566f" />
      <path d="M4 14a15 12 0 0 1 29 0q-14 5-29 0z" fill="#fff" opacity=".3" />
      <path d="M11 9.500q4-2.500 7.500-.8l-1.800 8q-4-1.700-8 .5z" fill="#ee6a35" />
      <path d="M20 9.500q4.500 1.500 10-.5l-2.500 8.500q-5 2-9.300 0z" fill="#98cf46" />
      <path d="M8.200 19q4.500-2 8-.3l-2 8.200q-4-1.500-8 .8z" fill="#52b0ea" />
      <path d="M17.700 19.200q4.600 2 9.500.3l-2.400 8q-4.500 1.500-9.200-.3z" fill="#ffd347" />
    </svg>
  );
}

function TaskBar() {
  const task = 'h-[28px] w-[42px] rounded-[2px] border';
  return (
    <div className="relative flex h-[29px] shrink-0 items-center border-t border-[#5f6b76] bg-[#080d15] text-white">
      <IconButton label="开始" className="absolute top-[-7px] left-[8px] h-[37px] w-[37px]">
        <StartOrb />
      </IconButton>
      <div className="flex gap-[4px] pl-[60px]">
        <IconButton label="Dev-C++" className={`${task} border-[#777] bg-linear-to-br from-[#6b6d6f] to-[#17191b]`}>
          <svg width="16" height="16" viewBox="0 0 16 16" fill="none">
            <path d="M0 0h16v8H0z" fill="#354468" />
            <path d="M1.500 2v4h1Q5 6 5 4T2.500 2zM9.500 2h-3v4h3M6.500 4h2.500M11 1.500l1.500 4.500L14.500 1.500" stroke="#fff" strokeWidth="1.300" />
            <path d="M0 8h16v8H0z" fill="#0b2f78" />
            <path d="M6 10H2v4h4M7 12h4M9 10v4M11.500 12h4M13.500 10v4" stroke="#1e8cff" strokeWidth="1.800" />
          </svg>
        </IconButton>
        <IconButton label="浏览器" className={`${task} border-[#ddd] bg-linear-to-br from-[#d5d7d8] to-[#85898c]`}>
          <svg width="16" height="16" viewBox="0 0 16 16" fill="none">
            <circle cx="8" cy="8" r="7.300" fill="#5cbf25" stroke="#e9f7df" />
            <path d="M4 8.300h8C12 5.500 10.500 4 8 4S4 5.700 4 8.200 5.500 12.300 8 12.300c1.600 0 2.800-.5 3.500-1.600" stroke="#fff" strokeWidth="1.800" />
          </svg>
        </IconButton>
        <IconButton label="Firefox" className={`${task} border-[#777] bg-linear-to-br from-[#6b6d6f] to-[#17191b]`}>
          <svg width="16" height="16" viewBox="0 0 16 16">
            <circle cx="8" cy="8.300" r="7.500" fill="#ff7a1a" />
            <path d="M9 .2c4 1 7 4 6.500 8.500S11 16 8 15.800C12 14 13 10 11.500 7 10.500 4.500 8 3.500 9 .2z" fill="#ffcf2e" />
            <path d="M.6 7C1 12 3 15.500 8 15.800c-4-2-6-5-5-10.800z" fill="#e5273f" />
            <circle cx="7.500" cy="7.500" r="4" fill="#2163c9" />
            <path d="M3 5c2 0 3 1 5 1.500L6 9c1 1.500 3 1.500 4.500.5C9 13 4 12 3.500 8.500z" fill="#ff9a1f" />
          </svg>
        </IconButton>
      </div>

      <div className="ml-auto flex h-full items-center">
        <IconButton label="输入法" className="w-[22px] pb-[4px]">
          <svg width="16" height="14" viewBox="0 0 16 14" fill="none">
            <rect x=".5" y="5.500" width="15" height="8" fill="#555" stroke="#d8d8d8" />
            <path d="M2 8h12M2 10h12M4 12h8" stroke="#ddd" strokeDasharray="1.500 .8" />
            <path d="M4 5V3h4l5-2" stroke="#bbb" />
          </svg>
        </IconButton>
        <IconButton label="帮助" className="w-[22px] pb-[4px]">
          <span className="flex h-[15px] w-[15px] items-center justify-center rounded-full border border-[#b7bddd] bg-[#1b2cb0] text-[12px] leading-[13px] font-bold">?</span>
        </IconButton>
        <IconButton label="语言栏选项" className="w-[22px] pb-[4px]">
          <svg width="9" height="17" viewBox="0 0 9 17" fill="none" stroke="#fff">
            <path d="M.5 2.500h5v3h-5zM3 2V.5h5v3H6" />
            <path d="M2 13.500h5L4.500 16z" fill="#fff" stroke="none" />
          </svg>
        </IconButton>
        <IconButton label="安全" className="w-[22px]">
          <svg width="15" height="15" viewBox="0 0 15 15">
            <path d="M0 5q0-4.500 4-4.500h7q4 0 4 4.500L10 7 5 6z" fill="#3c9be8" />
            <path d="M0 5q0 6.500 8 10l1-5-4-4z" fill="#f28a1f" />
            <path d="M15 5q0 6.500-7 10l2-8z" fill="#41b146" />
            <path d="M5 5h5.500L8 10z" fill="#0b121a" />
          </svg>
        </IconButton>
        <IconButton label="卫士" className="mr-[24px] w-[26px]">
          <svg width="16" height="16" viewBox="0 0 16 16">
            <path d="M8 .8l6.500 1.700V8c0 4-2.500 6-6.500 7.300C4 14 1.500 12 1.500 8V2.500z" fill="#5cb531" stroke="#e5f5d8" strokeWidth="1.300" />
            <path d="M9.500 3L4.500 8.500h3L6 13l5.500-6H8.300z" fill="#fff" />
          </svg>
        </IconButton>
        <IconButton label="加速球" className="w-[24px]">
          <PlusBall />
        </IconButton>
        <IconButton label="操作中心" className="w-[24px]">
          <svg width="15" height="15" viewBox="0 0 15 15">
            <path d="M1.500 1v14" stroke="#fff" />
            <path d="M3 2h4l1 1h4v6H8L7 8H3z" fill="#fff" />
            <circle cx="10.500" cy="10.500" r="4.500" fill="#d92b23" />
            <path d="M8.500 8.500l4 4M12.500 8.500l-4 4" stroke="#fff" strokeWidth="1.500" />
          </svg>
        </IconButton>
        <IconButton label="网络" className="w-[24px]">
          <svg width="15" height="14" viewBox="0 0 15 14" fill="none" stroke="#fff">
            <path d="M5 3.500h9v7H5zM6 13h7M9.500 10.500V13M1 1v3h3V1M2.500 4v8H5" />
          </svg>
        </IconButton>
        <IconButton label="音量" className="mr-[15px] w-[24px]">
          <svg width="15" height="13" viewBox="0 0 15 13" fill="none" stroke="#fff">
            <path d="M1 4.500h2.500L7 1v11L3.500 8.500H1z" fill="#fff" />
            <path d="M9 4.500q1.500 2 0 4M11 3q2.500 3.500 0 7M13 1.500q3 5 0 10" />
          </svg>
        </IconButton>
        <time className="mr-[12px] text-[12px]">11:07</time>
        <button type="button" aria-label="显示桌面" className="h-full w-[14px] border border-[#555] bg-linear-to-br from-[#444] to-[#111]" />
      </div>
    </div>
  );
}

export default function App() {
  const [params, setParams] = useState<Params>({ H: 10, h: 1.1, D: 10 });

  return (
    <div className="relative flex h-screen flex-col overflow-hidden bg-white font-['Noto_Sans','Noto_Sans_CJK_SC',sans-serif]">
      <BrowserLogo />
      <TabBar />
      <AddressBar />
      <BookmarkBar />
      <div className="flex min-h-0 flex-1">
        <Sidebar />
        <main className="flex min-w-0 flex-1 flex-col">
          <Header />
          <div className="flex min-h-0 flex-1">
            <ExpressionPanel params={params} setParams={setParams} />
            <Graph params={params} />
          </div>
        </main>
      </div>
      <StatusBar />
      <TaskBar />
    </div>
  );
}
